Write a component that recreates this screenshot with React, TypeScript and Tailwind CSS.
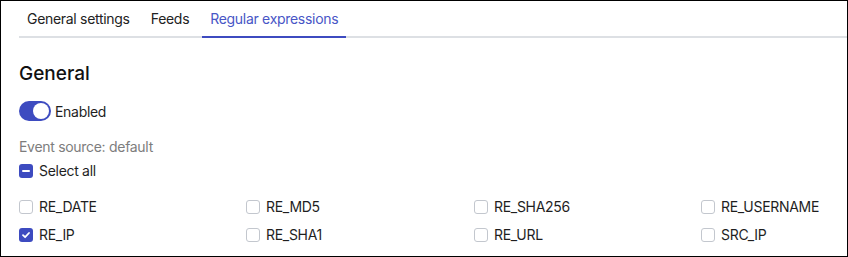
import React from "react";

const BLUE = "#3d4bc0";

function Box({ state }: { state: "off" | "on" | "mixed" }) {
  if (state === "off") {
    return <span className="w-[14px] h-[14px] rounded-[3px] border border-[#c3c7ce] bg-white shrink-0" />;
  }
  return (
    <span className="w-[14px] h-[14px] rounded-[3px] bg-[#3d4bc0] shrink-0 flex items-center justify-center">
      {state === "on" ? (
        <svg width="10" height="10" viewBox="0 0 10 10">
          <path d="M2 5.2 L4.1 7.2 L8 3" fill="none" stroke="white" strokeWidth="1.8" strokeLinecap="round" strokeLinejoin="round" />
        </svg>
      ) : (
        <span className="w-[8px] h-[2px] bg-white rounded-full" />
      )}
    </span>
  );
}

function Check({ label, state }: { label: string; state: "off" | "on" | "mixed" }) {
  return (
    <div className="flex items-center gap-[6px] h-5">
      <Box state={state} />
      <span className="text-[14px] text-[#1f1f1f] leading-5 tracking-[-0.3px]">{label}</span>
    </div>
  );
}

export default function App() {
  const items: [string, "off" | "on"][] = [
    ["RE_DATE", "off"],
    ["RE_MD5", "off"],
    ["RE_SHA256", "off"],
    ["RE_USERNAME", "off"],
    ["RE_IP", "on"],
    ["RE_SHA1", "off"],
    ["RE_URL", "off"],
    ["SRC_IP", "off"],
  ];
  return (
    <div
      className="w-[848px] h-[257px] border border-black bg-white overflow-hidden"
      style={{ fontFamily: "Inter, 'Noto Sans', sans-serif" }}
    >
      <div className="ml-[18px] flex gap-[5px] h-[37px] border-b-2 border-[#dde0e4] tracking-[-0.3px]">
        <div className="px-2 flex items-center text-[14px] text-[#222]">General settings</div>
        <div className="px-2 flex items-center text-[14px] text-[#222]">Feeds</div>
        <div className="px-2 flex items-center text-[14px] text-[#4856c6] border-b-2 border-[#3d4bc0] -mb-[2px]">
          Regular expressions
        </div>
      </div>
      <div className="pl-[18px]">
        <div className="mt-[22px] h-7 leading-7 text-[19px] font-medium text-[#111]">General</div>
        <div className="mt-[13px] flex items-center gap-[4px] h-5">
          <span className="w-[32px] h-[20px] rounded-full flex items-center justify-end px-[2px]" style={{ background: BLUE }}>
            <span className="w-[16px] h-[16px] rounded-full bg-white" />
          </span>
          <span className="text-[14px] text-[#1f1f1f] tracking-[-0.3px]">Enabled</span>
        </div>
        <div className="mt-[16px] h-5 leading-5 text-[14px] text-[#7d7d7d] tracking-[-0.3px]">Event source: default</div>
        <div className="mt-[4px]">
          <Check label="Select all" state="mixed" />
        </div>
        <div className="mt-[16px] grid grid-cols-[227px_228px_227px_227px] gap-y-[8px]">
          {items.map(([l, s]) => (
            <Check key={l} label={l} state={s} />
          ))}
        </div>
      </div>
    </div>
  );
}
